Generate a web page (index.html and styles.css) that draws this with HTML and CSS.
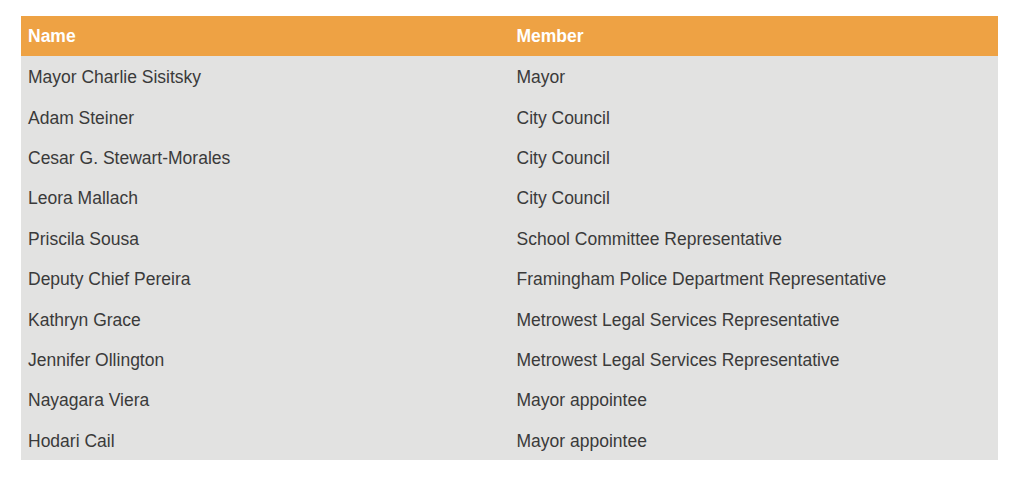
FILE: index.html
```html
<!DOCTYPE html>
<html>
<head>
<meta charset="utf-8">
<link rel="stylesheet" href="styles.css">
</head>
<body>
<table class="members">
  <thead>
    <tr><th>Name</th><th>Member</th></tr>
  </thead>
  <tbody>
    <tr><td>Mayor Charlie Sisitsky</td><td>Mayor</td></tr>
    <tr><td>Adam Steiner</td><td>City Council</td></tr>
    <tr><td>Cesar G. Stewart-Morales</td><td>City Council</td></tr>
    <tr><td>Leora Mallach</td><td>City Council</td></tr>
    <tr><td>Priscila Sousa</td><td>School Committee Representative</td></tr>
    <tr><td>Deputy Chief Pereira</td><td>Framingham Police Department Representative</td></tr>
    <tr><td>Kathryn Grace</td><td>Metrowest Legal Services Representative</td></tr>
    <tr><td>Jennifer Ollington</td><td>Metrowest Legal Services Representative</td></tr>
    <tr><td>Nayagara Viera</td><td>Mayor appointee</td></tr>
    <tr><td>Hodari Cail</td><td>Mayor appointee</td></tr>
  </tbody>
</table>
</body>
</html>
```
FILE: styles.css
```css
html, body {
  margin: 0;
  padding: 0;
  background: #ffffff;
}
body {
  padding: 16px 26px 0 21px;
  font-family: "Liberation Sans", Arial, sans-serif;
}
.members {
  width: 977px;
  border-collapse: collapse;
  table-layout: fixed;
  background: #e2e2e1;
  color: #3a3a3a;
  font-size: 17.5px;
}
.members th {
  background: #eea244;
  color: #ffffff;
  font-weight: bold;
  text-align: left;
  height: 40px;
  padding: 0 7px;
  box-sizing: border-box;
}
.members td {
  height: 40.4px;
  padding: 3px 7px 0;
  box-sizing: border-box;
  vertical-align: middle;
}
```
